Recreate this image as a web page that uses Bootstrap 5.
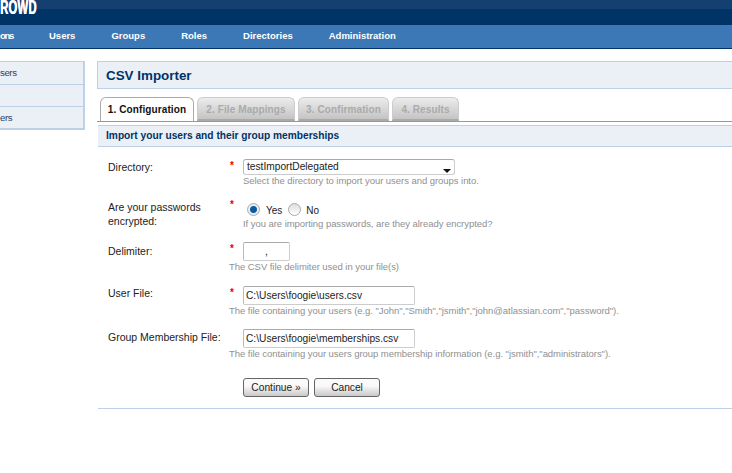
<!doctype html>
<html lang="en"><head><meta charset="utf-8"><title>CSV Importer</title>
<link href="https://cdn.jsdelivr.net/npm/bootstrap@5.3.0/dist/css/bootstrap.min.css" rel="stylesheet">
<style>
html,body{height:100%;overflow:hidden;background:#fff}
body{font-family:"Liberation Sans",Arial,sans-serif;font-size:10.5px;color:#222;line-height:14px}
.hdr{height:25px;background:linear-gradient(#134070 0 9px,#003366 9px);overflow:hidden}
.logo{display:inline-block;font-size:20px;font-weight:700;line-height:14px;color:#fff;letter-spacing:.5px;transform:scaleX(.56);transform-origin:left top;text-shadow:.8px 0 0 #fff}
.topnav{height:24px;background:#3c78b5;border-bottom:1px solid #003366;gap:36px;font-weight:700;color:#fff;font-size:9.5px;line-height:22px}
.ons{letter-spacing:-1.3px}
.wrap{padding-top:12px;gap:12px}
.side{width:85px;flex:none;background:#ebf0f7;border:solid #bcd0e8;border-width:1px 2px 2px 0;height:69px;overflow:hidden;color:#2a4468;font-size:9.6px}
.side div{height:22.5px;line-height:22px;border-bottom:1px solid #bcd0e8;white-space:nowrap;letter-spacing:-.4px}
.side div:last-child{border-bottom:0}
.mainp{flex:1;min-width:0}
.ttl{height:28px;background:#ebf0f7;border:solid #bcd0e8;border-width:1px 0 1px 1px;font-size:13.4px;font-weight:700;color:#003366;line-height:27px;padding-left:8px}
.tabsx{margin-top:8px;height:25px;border-bottom:1px solid #999;padding-left:3px;gap:3px}
.tabx{height:24px;width:91px;border:1px solid #ccc;border-bottom:2px solid #aaa;border-radius:6px 6px 0 0;background:linear-gradient(#ececec,#c4c4c4);color:#aaa;font-weight:700;line-height:24px;text-align:center;font-size:10px;white-space:nowrap;letter-spacing:.1px}
.tabx.on{background:#fff;color:#111;width:94px;border-color:#aaa;border-bottom:0}
.tabx.t2{width:98px}.tabx.t4{width:67px}
.sub{margin:3px 0 0 1px;height:22px;background:#ebf0f7;border:solid #bcd0e8;border-width:1px 0 1px;font-weight:700;color:#003366;line-height:20px;padding-left:8px;font-size:10.2px}
.frm{margin-left:1px;height:262px;border-bottom:1px solid #bcd0e8;padding:12px 0 0 10px}
.rowx{display:flex}
.r1{height:39px}.r2,.r3{height:44px}.r4{height:43px}.r5{height:49px}
.lbl{width:121px;flex:none;padding-top:1px;color:#222}
.r2 .lbl,.r3 .lbl{padding-top:2px}.r4 .lbl{padding-top:0}
.star{width:14px;flex:none;color:#e00;font-weight:700;line-height:10px;padding:2px 0 0 1px;font-size:10px}
.note{color:#909090;font-size:9.5px;line-height:12px;white-space:nowrap;letter-spacing:-.05px}
.note.flush{margin-left:-14px}
.inp{height:19px;background:#fff;border:1px solid #ccc;border-top-color:#aaa;border-left-color:#bbb;border-radius:2px;padding:0 2px;line-height:17px;font-size:10.2px;color:#222}
.slct{width:212px;height:16px;line-height:14px;position:relative;padding-left:3px;border-radius:3px}
.caret{position:absolute;right:3px;bottom:1px;width:0;height:0;border:solid transparent;border-width:4px 4px 0;border-top-color:#111}
.wide{width:172px}.tiny{width:47px;text-align:center}
.rad{height:20px;padding:2px 0 0 4px}
.dot{width:13px;height:13px;border-radius:50%;border:1px solid #aaa;flex:none;background:linear-gradient(#ddd,#fff)}
.dot.sel{background:radial-gradient(circle,#0b5c9e 0 3px,#e8eef4 4px)}
.opt{padding:3px 6px 0 6px;font-size:10px}
.opt2{padding:3px 0 0 5px;font-size:10px}
.btnx{width:66px;height:19px;border:1px solid #666;border-radius:3px;background:linear-gradient(#fafafa 40%,#c8c8c8);color:#222;line-height:17px;text-align:center;font-size:10.2px}
.gap5{gap:5px}
</style></head><body>
<div class="hdr"><span class="logo">ROWD</span></div>
<div class="topnav d-flex"><span class="ons">ons</span><span>Users</span><span>Groups</span><span>Roles</span><span>Directories</span><span>Administration</span></div>
<div class="wrap d-flex">
<div class="side"><div>sers</div><div></div><div>ers</div></div>
<div class="mainp">
<div class="ttl">CSV Importer</div>
<div class="tabsx d-flex"><div class="tabx on">1. Configuration</div><div class="tabx t2">2. File Mappings</div><div class="tabx">3. Confirmation</div><div class="tabx t4">4. Results</div></div>
<div class="sub">Import your users and their group memberships</div>
<div class="frm">
<div class="rowx r1"><div class="lbl">Directory:</div><div class="star">*</div><div><div class="inp slct">testImportDelegated<span class="caret"></span></div><div class="note">Select the directory to import your users and groups into.</div></div></div>
<div class="rowx r2"><div class="lbl">Are your passwords encrypted:</div><div class="star">*</div><div><div class="d-flex align-items-center rad"><span class="dot sel"></span><span class="opt">Yes</span><span class="dot"></span><span class="opt2">No</span></div><div class="note">If you are importing passwords, are they already encrypted?</div></div></div>
<div class="rowx r3"><div class="lbl">Delimiter:</div><div class="star">*</div><div><div class="inp tiny">,</div><div class="note flush">The CSV file delimiter used in your file(s)</div></div></div>
<div class="rowx r4"><div class="lbl">User File:</div><div class="star">*</div><div><div class="inp wide">C:\Users\foogie\users.csv</div><div class="note flush">The file containing your users (e.g. "John","Smith","jsmith","john@atlassian.com","password").</div></div></div>
<div class="rowx r5"><div class="lbl">Group Membership File:</div><div class="star"></div><div><div class="inp wide">C:\Users\foogie\memberships.csv</div><div class="note flush">The file containing your users group membership information (e.g. "jsmith","administrators").</div></div></div>
<div class="rowx"><div class="lbl"></div><div class="star"></div><div class="d-flex gap5"><div class="btnx">Continue »</div><div class="btnx">Cancel</div></div></div>
</div>
</div></div>
</body></html>
